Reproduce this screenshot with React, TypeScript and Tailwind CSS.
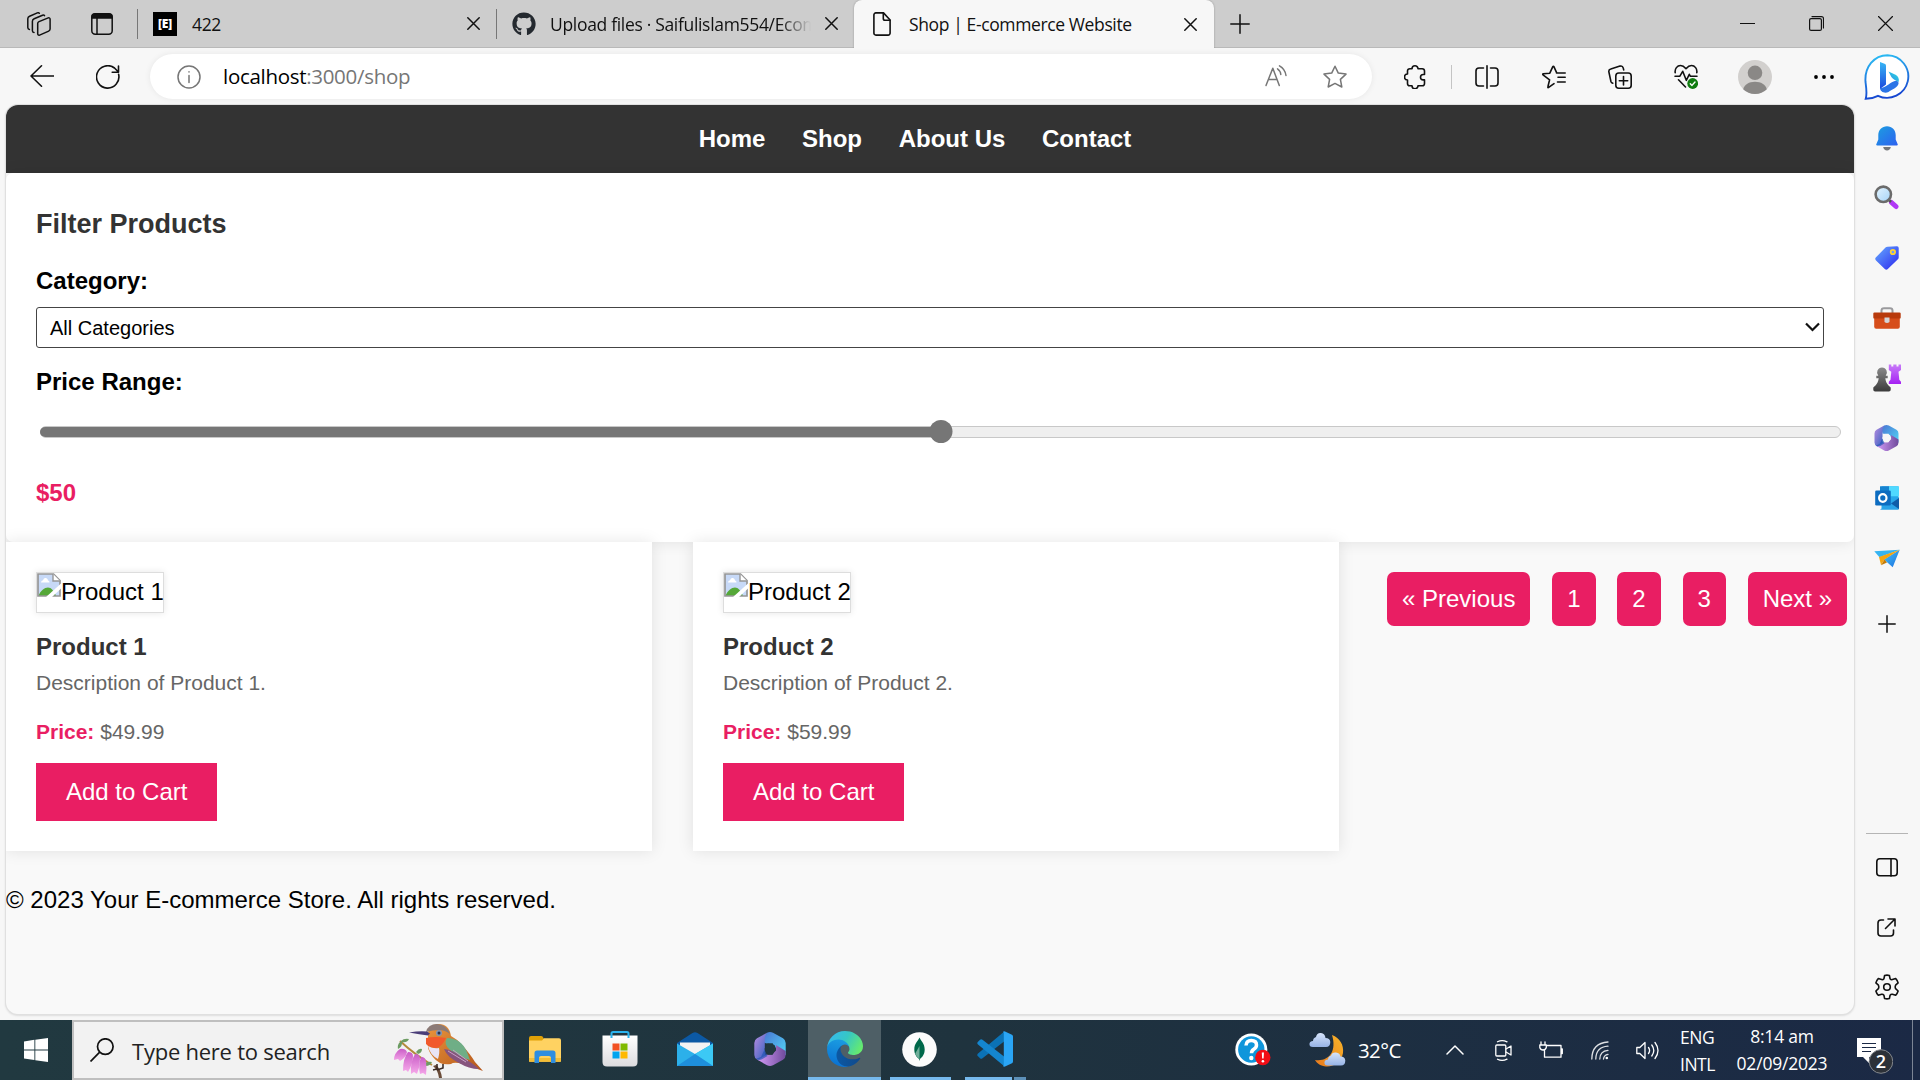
import React from "react";
import { FaGithub } from "react-icons/fa";

type P = { className?: string };
const line = { fill: "none", stroke: "currentColor", strokeLinecap: "round" as const, strokeLinejoin: "round" as const };

/* ---------- small glyphs ---------- */

const Close = ({ className = "" }: P) => (
  <svg viewBox="0 0 13 13" className={`h-[13px] w-[13px] shrink-0 ${className}`} {...line} strokeWidth="1.5">
    <path d="M.8.8l11.4 11.4M12.2.8L.8 12.2" />
  </svg>
);

const Workspaces = () => (
  <svg viewBox="0 0 24 24" className="ml-[27px] h-6 w-6 shrink-0" {...line} strokeWidth="1.5">
    <path d="M12 9.6c-.9.4-1.3 1-1.3 1.9v10.2c0 1.1.8 1.8 1.900 1.400l9.100-4c.9-.4 1.400-1.100 1.400-2V7.300c0-1.200-.9-1.800-1.900-1.400z" />
    <path d="M17.500 3.600c-.5-.6-1.200-.7-2-.4L7.200 6.800C6 7.300 5.400 8 5.400 9.200v9.600c0 1 .6 1.700 1.600 1.700" />
    <path d="M12.300 1.200c-.5-.5-1.200-.6-2-.3L2.600 4.300C1.400 4.800.8 5.500.8 6.700v8.800c0 1 .6 1.700 1.600 1.900" />
  </svg>
);

const TabPane = () => (
  <svg viewBox="0 0 22 22" className="ml-[40px] h-[22px] w-[22px] shrink-0" {...line} strokeWidth="1.5">
    <rect x=".8" y=".8" width="20.400" height="20.400" rx="3.500" />
    <path d="M1 5V3.500Q1 1 3.500 1h15Q21 1 21 3.500V5z" fill="currentColor" />
    <path d="M6 5.500V21" />
  </svg>
);

const PageIcon = () => (
  <svg viewBox="0 0 18 24" className="h-6 w-[18px] shrink-0" {...line} strokeWidth="1.6">
    <path d="M3 .9h7.500L17.100 8v13a2 2 0 0 1-2 2.100H3A2 2 0 0 1 .9 21V3A2 2 0 0 1 3 .9z" />
    <path d="M10.300 1v5.400c0 1 .7 1.800 1.700 1.800h5" />
  </svg>
);

const Puzzle = () => (
  <svg viewBox="0 0 22 24" className="ml-8 h-6 w-[22px] shrink-0" {...line} strokeWidth="1.6">
    <path d="M8 3.800a3 3 0 0 1 6 0h4.200c1.400 0 2.300.9 2.300 2.300v3.400h-1.300a2.700 2.700 0 0 0 0 5.400h1.300v3.600c0 1.400-.9 2.300-2.300 2.300H14a3 3 0 0 1-6 0H5.800c-1.400 0-2.300-.9-2.300-2.300V15a3 3 0 0 1 0-6V6.100c0-1.400.9-2.300 2.300-2.300z" />
  </svg>
);

const Split = () => (
  <svg viewBox="0 0 24 24" className="ml-[23px] h-6 w-6 shrink-0" {...line} strokeWidth="1.600">
    <path d="M12 .8v22.400M8.500 3H4Q1 3 1 6v12q0 3 3 3h4.500M15.500 3H20q3 0 3 3v12q0 3-3 3h-4.500" />
  </svg>
);

const FavList = () => (
  <svg viewBox="0 0 24 24" className="ml-[43px] h-6 w-6 shrink-0" {...line} strokeWidth="1.600">
    <path d="M12 18.600l-5.300 3.800c-.6.400-1 .1-.8-.6l1.700-7L1 9.800c-.5-.4-.3-.9.300-1l6.500-.6 3-6.500c.3-.6.800-.6 1.100 0l2.700 6M16 12.300h7.200M14.500 8h8.700M15.500 17h7.700" />
  </svg>
);

const Collections = () => (
  <svg viewBox="0 0 24 24" className="ml-[42px] h-6 w-6 shrink-0" {...line} strokeWidth="1.600">
    <rect x="7.800" y="8" width="15.400" height="15.200" rx="3" />
    <path d="M15.500 11.500v8.400M11.300 15.700h8.400M4.800 18.200c-1-.2-1.600-.8-1.900-1.800L.9 7C.6 5.500 1.300 4.300 2.800 3.900L12 1.100c1.600-.4 2.800.3 3.200 1.800l.5 2" />
  </svg>
);

const Health = () => (
  <svg viewBox="0 0 24 25" className="ml-[42px] h-[25px] w-6 shrink-0" {...line} strokeWidth="1.600">
    <path d="M1.200 8.600C.6 4.800 3.200 1.500 6.500 1.500c2.200 0 3.800 1.200 5.500 3.200 1.700-2 3.300-3.200 5.500-3.200 3.300 0 5.900 3.300 5.300 7.100M1 12.300h4.700l3-5 3.600 9 3-6 1.200 2H23M4.500 15.800l7 7.200" />
    <circle cx="18.700" cy="19.500" r="5.400" fill="#107c10" stroke="none" />
    <path d="M16.300 19.700l1.700 1.700 3-3.400" stroke="#fff" strokeWidth="1.400" />
  </svg>
);

const Bing = () => (
  <svg viewBox="0 0 46 46" className="ml-[30px] h-[46px] w-[46px] shrink-0">
    <defs>
      <linearGradient id="bo" x1="0" y1="0" x2=".2" y2="1"><stop stopColor="#2cc3f5" /><stop offset="1" stopColor="#1747d1" /></linearGradient>
      <linearGradient id="bb" x1="0" y1="0" x2="0" y2="1"><stop stopColor="#37b6f5" /><stop offset="1" stopColor="#1b48dd" /></linearGradient>
      <linearGradient id="bc" x1="0" y1="1" x2="1" y2="0"><stop stopColor="#2a86e8" /><stop offset="1" stopColor="#2ee0e0" /></linearGradient>
    </defs>
    <path d="M23.500 1.200A21.300 21.300 0 1 1 14 41.800c-3.500 1.800-7.500 3-12.300 3C3.300 40 2.300 34 1.500 28 .4 13 10 1.200 23.500 1.200z" fill="#fff" stroke="url(#bo)" strokeWidth="1.900" />
    <path d="M16 8l4.500 1.800c1 .4 1.500 1 1.500 2.200v18.500L16 35z" fill="url(#bb)" />
    <path d="M24.500 17.500l7 3.200c2.800 1.400 3.800 4 3.200 7.200-4-2-6-3-7.300-5z" fill="url(#bc)" />
    <path d="M16 34c4 .5 9-4.500 13.500-6.500 4-1.500 6.200.5 4.500 3.500-2 3.500-7 5-9.500 7-4 2-8.500-.5-8.500-4z" fill="#2b74e6" />
  </svg>
);

const M365 = ({ className = "" }: P) => (
  <svg viewBox="0 0 32 34" className={className}>
    <defs>
      <linearGradient id="ma" x1="0" y1="0" x2="1" y2="1"><stop stopColor="#b98de0" /><stop offset="1" stopColor="#2f5fc0" /></linearGradient>
      <linearGradient id="mb" x1="0" y1="0" x2="1" y2="1"><stop stopColor="#4a78d4" /><stop offset="1" stopColor="#52d6f6" /></linearGradient>
      <linearGradient id="mc" x1="0" y1="0" x2="1" y2="0"><stop stopColor="#d19af5" /><stop offset="1" stopColor="#6f4a9c" /></linearGradient>
    </defs>
    <path d="M13 .7L3 6.300Q.3 8 .3 11v12q0 3 3 4.700l1.500.9 7-4.600-1-2.700V11z" fill="url(#ma)" />
    <path d="M13 .7q3-1.400 6 0l10 5.600Q31.700 8 31.700 11v12L22 16.500 20.500 13 10.800 11V5z" fill="url(#mb)" />
    <path d="M31.700 19v4q0 3-2.700 4.700l-10 5.600q-3 1.400-6 0L4 28.100l9-5.600h5l4-4V13z" fill="url(#mc)" />
    <path d="M2 26.800q3 2 6 .5L13.500 24l-3-6.500L7 25z" fill="#2756b5" opacity=".7" />
    <path d="M13.500 11.300h5.200l3 5.700-3 5.700h-5.200l-3-5.700z" className="fill-current" />
  </svg>
);

/* ---------- edge sidebar icons ---------- */

const Bell = () => (
  <svg viewBox="0 0 22 25" className="h-[25px] w-[22px]">
    <defs><linearGradient id="be" x1="0" y1="0" x2="1" y2="1"><stop stopColor="#1c9fe0" /><stop offset="1" stopColor="#2d60f0" /></linearGradient></defs>
    <path d="M11 .3c5 0 8.700 3.800 8.700 8.700v4.500l2 4.800q.4 1.300-1 1.300H1.300q-1.400 0-1-1.300l2-4.800V9C2.300 4.100 6 .3 11 .3z" fill="url(#be)" />
    <path d="M7.200 21h7.600c-.4 2.200-1.800 3.600-3.800 3.600S7.600 23.200 7.200 21z" fill="#74767a" />
  </svg>
);

const SideSearch = () => (
  <svg viewBox="0 0 25 25" className="mb-[2px] h-[25px] w-[25px]">
    <defs><linearGradient id="gl" x1="0" y1="0" x2="1" y2="1"><stop stopColor="#e5f5ff" /><stop offset="1" stopColor="#a5d3f7" /></linearGradient></defs>
    <path d="M17.500 17.500l4.500 4" stroke="#b038f5" strokeWidth="5" strokeLinecap="round" />
    <path d="M14 14l3 3" stroke="#555" strokeWidth="2.500" />
    <circle cx="9.300" cy="9.300" r="7.700" fill="url(#gl)" stroke="#6b6b6b" strokeWidth="2.600" />
  </svg>
);

const Tag = () => (
  <svg viewBox="0 0 24 24" className="h-6 w-6">
    <defs><linearGradient id="tg" x1="0" y1="0" x2="1" y2="1"><stop stopColor="#66adff" /><stop offset="1" stopColor="#2b25ee" /></linearGradient></defs>
    <path d="M12.500.8L22 .3q1.700 0 1.700 1.700v9.500q0 1-.8 1.800L12.800 23q-1.500 1.300-3 0L1 14.500q-1.600-1.700 0-3.200L10.500 1.600q.8-.8 2-.8z" fill="url(#tg)" />
    <circle cx="17.900" cy="6" r="2.200" fill="#6f9cf5" stroke="#ffd335" strokeWidth="1.800" />
  </svg>
);

const Toolbox = () => (
  <svg viewBox="0 0 28 22" className="h-[22px] w-7">
    <path d="M8.500 6V3.600Q8.500 1.200 11 1.200h6q2.500 0 2.500 2.400V6" fill="none" stroke="#9a9a9d" strokeWidth="2" />
    <rect x="1.200" y="9" width="25.600" height="12.700" rx="2" fill="#d64d1a" />
    <path d="M1.500 5.400h25q1.200 0 1.200 1.200v3.800q0 1.200-1.200 1.200h-25Q.3 11.600.3 10.400V6.600q0-1.200 1.200-1.200z" fill="#b83a0c" />
    <path d="M11.500 10.500h5v4.500q-2.500 2-5 0z" fill="#d4d4d7" />
  </svg>
);

const Chess = () => (
  <svg viewBox="0 0 28 28" className="h-7 w-7">
    <defs>
      <linearGradient id="rk" x1="0" y1="0" x2="0" y2="1"><stop stopColor="#c77bf8" /><stop offset="1" stopColor="#a521f3" /></linearGradient>
      <linearGradient id="pn" x1="0" y1="0" x2="0" y2="1"><stop stopColor="#8a8a8a" /><stop offset="1" stopColor="#3b3b3b" /></linearGradient>
    </defs>
    <path d="M15.800.5h2.500v2h2V.5h3.200v2h2V.5H28V6l-2.500 1.800.8 8 1.700 2V20H15.800v-2.200l1.700-2 .8-8L15.800 6z" fill="url(#rk)" />
    <path d="M9 3.500a5 5 0 0 1 3.700 8.300h2v2.400h-2.400c.3 3 1.400 5 3 7l2.400 2.200v2.300q0 1.800-1.800 1.800H2.100Q.3 27.500.3 25.700v-2.300l2.400-2.200c1.600-2 2.700-4 3-7H3.300v-2.400h2A5 5 0 0 1 9 3.500z" fill="url(#pn)" />
  </svg>
);

const Outlook = () => (
  <svg viewBox="0 0 24 24" className="h-6 w-6">
    <path d="M6.500.3h17v22.200h-17z" fill="#28a8ea" /><path d="M5 .3h9v8H5z" fill="#1683d0" /><path d="M14 .3h9q1 0 1 1v9H14z" fill="#50d9ff" />
    <path d="M5 23.500L24 11v11.500q0 1.200-1.200 1.200H6.500z" fill="#2aa3e8" /><path d="M16 17.500L24 12v11z" fill="#0f5ca8" />
    <rect x=".2" y="4.500" width="15.600" height="15" rx="1.300" fill="#0d6cc0" />
    <ellipse cx="7.800" cy="12" rx="3.700" ry="3.800" fill="none" stroke="#fff" strokeWidth="2.200" />
  </svg>
);

const Plane = () => (
  <svg viewBox="0 0 26 18" className="h-[19px] w-[26px]">
    <defs><linearGradient id="pl" x1="0" y1="0" x2="1" y2="1"><stop stopColor="#45c7f7" /><stop offset="1" stopColor="#1b6de0" /></linearGradient></defs>
    <path d="M.3 1.800L25.700.2 5.500 7.800z" fill="#35b4f2" /><path d="M10 10L25.700.2 18.700 17.800z" fill="url(#pl)" />
    <path d="M5 7.600L25.700.3 10.500 10 7 15.500z" fill="#f5a511" /><path d="M7 15.700l3.500-5.700 2.500 3z" fill="#c57c08" />
  </svg>
);

const Gear = () => (
  <svg viewBox="0 0 24 26" className="h-[26px] w-6" {...line} strokeWidth="1.600">
    <path d="M9.600 1.500q2.400-.8 4.800 0l.7 3.300q.9 1.200 2.300.8l3.300-1q1.800 1.900 2.400 4.300L20.600 11.200q-.8 1.800 0 3.500l2.500 2.300q-.7 2.400-2.400 4.300l-3.300-1q-1.400-.3-2.300.9l-.7 3.300q-2.400.8-4.800 0l-.7-3.300q-.9-1.200-2.300-.9l-3.300 1Q1.500 19.400.9 17l2.500-2.300q.8-1.700 0-3.500L.9 8.900Q1.500 6.500 3.300 4.600l3.300 1q1.400.4 2.300-.8z" />
    <circle cx="12" cy="13" r="3.300" />
  </svg>
);

const sideIcons: React.ReactNode[] = [
  <Bell />, <SideSearch />, <Tag />, <Toolbox />, <Chess />,
  <M365 className="h-[26px] w-[25px] text-[#f7f7f7]" />, <Outlook />, <Plane />,
  <svg viewBox="0 0 18 18" className="mt-3 h-[18px] w-[18px]" {...line} strokeWidth="1.500"><path d="M9 .8v16.400M.8 9h16.400" /></svg>,
];

const sideTools: React.ReactNode[] = [
  <svg viewBox="0 0 22 19" className="h-[19px] w-[22px]" {...line} strokeWidth="1.600"><rect x=".8" y=".8" width="20.400" height="17" rx="3" /><path d="M15 1v17" /></svg>,
  <svg viewBox="0 0 19 19" className="h-[19px] w-[19px]" {...line} strokeWidth="1.600"><path d="M6.500 2H4Q1 2 1 5v10q0 3 3 3h9.500q3 0 3-3v-3M11 1h7v7M17.700 1.300L8.500 10.500" /></svg>,
  <Gear />,
];

/* ---------- browser chrome ---------- */

const TabBar = () => (
  <div className="flex h-12 shrink-0 items-center border-b border-[#b9b9b9] bg-[#cdcdcd] text-[17.5px] tracking-[-0.35px] text-[#111]">
    <Workspaces />
    <TabPane />
    <div className="ml-6 h-[30px] w-px shrink-0 bg-[#777]" />
    <div className="ml-[15px] flex h-6 w-6 shrink-0 items-center justify-center bg-black text-[12px] font-extrabold leading-none tracking-[-0.2px] text-white">[E]</div>
    <div className="ml-[15px] w-[275px] shrink-0 pt-px">422</div>
    <Close />
    <div className="ml-4 h-[30px] w-px shrink-0 bg-[#777]" />
    <FaGithub className="ml-[15px] h-6 w-6 shrink-0 text-[#24292f]" />
    <div className="ml-[14px] w-[261px] shrink-0 overflow-hidden whitespace-nowrap pt-px tracking-[-0.32px] [mask-image:linear-gradient(to_right,black_88%,transparent)]">Upload files · Saifulislam554/Ecom</div>
    <Close className="ml-[14px]" />
    <div className="ml-4 flex h-12 w-[360px] shrink-0 items-center self-start rounded-t-lg bg-[#f7f7f7] pl-[19px] shadow-[0_0_2px_rgba(0,0,0,0.3)] [clip-path:inset(-2px_-2px_0_-2px)]">
      <PageIcon />
      <div className="ml-[18px] w-[275px] shrink-0 tracking-[-0.38px]">Shop | E-commerce Website</div>
      <Close />
    </div>
    <svg viewBox="0 0 20 20" className="ml-4 h-5 w-5 shrink-0" {...line} strokeWidth="1.500"><path d="M10 .8v18.400M.8 10h18.400" /></svg>
    <svg viewBox="0 0 15 15" className="ml-[490px] h-[15px] w-[15px] shrink-0" {...line} strokeWidth="1.200"><path d="M0 7.500h15" /></svg>
    <svg viewBox="0 0 15 15" className="ml-[54px] h-[15px] w-[15px] shrink-0" {...line} strokeWidth="1.200"><rect x=".6" y="2.600" width="11.800" height="11.800" rx="1.500" /><path d="M3 .6h9.500q2 0 2 2V12" /></svg>
    <svg viewBox="0 0 15 15" className="ml-[54px] h-[15px] w-[15px] shrink-0" {...line} strokeWidth="1.200"><path d="M.5.500l14 14M14.500.5l-14 14" /></svg>
  </div>
);

const Toolbar = () => (
  <div className="flex h-[57px] shrink-0 items-center text-[#111]">
    <svg viewBox="0 0 24 24" className="mb-[2px] ml-[30px] h-6 w-6 shrink-0" {...line} strokeWidth="1.600"><path d="M11.500 1.800L1 12l10.500 10.200M1 12h22.500" /></svg>
    <svg viewBox="0 0 24 24" className="ml-[42px] h-6 w-6 shrink-0" {...line} strokeWidth="1.600"><path d="M22.600 9.300A11.200 11.200 0 1 1 18.500 3l3.700 3.800M22.500 1v6.200h-6.300" /></svg>
    <div className="ml-[30px] flex h-[45px] w-[1222px] shrink-0 items-center rounded-full bg-white text-[#767676] shadow-[0_0_6px_rgba(0,0,0,0.07)]">
      <svg viewBox="0 0 24 24" className="ml-[27px] h-6 w-6 shrink-0" {...line} strokeWidth="1.500"><circle cx="12" cy="12" r="11" /><path d="M12 10.500v7M12 6.800v.2" /></svg>
      <div className="ml-[22px] w-[1042px] shrink-0 text-[20.5px] tracking-[-0.3px]"><span className="text-black">localhost</span>:3000/shop</div>
      <svg viewBox="0 0 22 22" className="mb-[2px] h-[22px] w-[22px] shrink-0" {...line} strokeWidth="1.500"><path d="M1 20.500L7.800 3.300l6.500 17.200M3.500 14.500h8.500M12.500 3.800q3 2 3.300 5.700M14.500.9q5.500 3 6.500 9.600" /></svg>
      <svg viewBox="0 0 24 24" className="ml-9 h-6 w-6 shrink-0" {...line} strokeWidth="1.500"><path d="M12 1.200l3.300 6.900 7.700 1-5.600 5.300 1.400 7.600L12 18.400l-6.800 3.600 1.400-7.600L1 9.100l7.700-1z" /></svg>
    </div>
    <Puzzle />
    <div className="ml-[25px] h-6 w-px shrink-0 bg-[#c4c4c4]" />
    <Split />
    <FavList />
    <Collections />
    <Health />
    <svg viewBox="0 0 34 34" className="ml-10 h-[34px] w-[34px] shrink-0">
      <circle cx="17" cy="17" r="17" fill="#d2d0ce" /><circle cx="17" cy="12.800" r="7.300" fill="#8a8886" />
      <path d="M5.200 29.200C6.500 24.500 11 21.800 17 21.800s10.500 2.700 11.800 7.400A17 17 0 0 1 5.200 29.200z" fill="#8a8886" />
    </svg>
    <svg viewBox="0 0 20 4" className="ml-[42px] h-1 w-5 shrink-0"><circle cx="2" cy="2" r="1.900" /><circle cx="10" cy="2" r="1.900" /><circle cx="18" cy="2" r="1.900" /></svg>
    <Bing />
  </div>
);

/* ---------- shop page ---------- */

const BrokenImage = () => (
  <svg viewBox="0 0 24 24" className="h-6 w-6 shrink-0">
    <path d="M1 1h15.500L23 7.500V23H1z" fill="#c7d9f7" />
    <path d="M4 9.500q0-2 2-2.200Q6.800 4.500 9 5q2 .5 2 2.500 1.500.2 1.500 2z" fill="#fff" />
    <path d="M1.500 23c2-5.500 6-8.500 9.500-8.500 3 0 6 3 8 8.500z" fill="#55a838" />
    <path d="M1 23V1h15.500L23 7.500V23z" fill="none" stroke="#969696" strokeWidth="1.700" />
    <path d="M16 1v7h7" fill="#fff" stroke="#969696" strokeWidth="1.400" />
    <path d="M8.500 24.500L24.500 10v5L14.500 24.500z" fill="#fff" />
  </svg>
);

const products = [
  { name: "Product 1", text: "Description of Product 1.", price: "$49.99" },
  { name: "Product 2", text: "Description of Product 2.", price: "$59.99" },
];

const Shop = () => (
  <main className="h-[909px] w-[1848px] overflow-hidden rounded-xl bg-[#f9f9f9] font-['Liberation_Sans',Arial,sans-serif] text-2xl leading-7 text-black shadow-[0_0_0_1px_#e0e0e0,0_1px_2px_1px_rgba(0,0,0,0.1)]">
    <nav className="flex h-[68px] justify-center gap-[36.67px] bg-[#333] pr-[30px] pt-5 font-bold text-white">
      {["Home", "Shop", "About Us", "Contact"].map((n) => <a key={n}>{n}</a>)}
    </nav>
    <section className="relative flex h-[369px] flex-col rounded-[7px] bg-white px-[30px] pt-[35px] shadow-[0_0_15px_rgba(0,0,0,0.1)]">
      <h2 className="text-[27px] font-bold leading-8 text-[#333]">Filter Products</h2>
      <label className="mt-[27px] font-bold">Category:</label>
      <div className="mt-3 flex h-[41px] shrink-0 items-center justify-between rounded-[3px] border border-[#444] pl-[13px] pr-[3px] text-[20px]">
        All Categories
        <svg viewBox="0 0 15 10" className="mb-px h-[10px] w-[15px]" fill="none" stroke="#111" strokeWidth="2.200"><path d="M1 1.500l6.500 6.500L14 1.500" /></svg>
      </div>
      <label className="mt-5 font-bold">Price Range:</label>
      <div className="relative -mr-[17px] ml-1 mt-[30px] h-3 shrink-0 rounded-full border border-[#c8c8c8] bg-[#efefef]">
        <div className="-ml-px h-[10px] w-1/2 rounded-l-full bg-[#767676]" />
        <div className="absolute left-1/2 top-[-7px] h-[23px] w-[23px] -translate-x-1/2 rounded-full bg-[#767676]" />
      </div>
      <p className="mt-[41px] font-bold text-[#e91e63]">$50</p>
    </section>
    <div className="flex items-start">
      {products.map((p) => (
        <article key={p.name} className="relative mr-[41px] flex h-[309px] w-[646px] shrink-0 flex-col items-start bg-white p-[30px] shadow-[0_0_15px_rgba(0,0,0,0.1)]">
          <div className="flex h-[41px] border border-[#ddd] shadow-[0_0_7px_rgba(0,0,0,0.1)]">
            <BrokenImage /><span className="-mr-px pt-[5px]">{p.name}</span>
          </div>
          <h3 className="mt-5 font-bold text-[#333]">{p.name}</h3>
          <p className="mt-[10px] text-[21px] leading-6 text-[#666]">{p.text}</p>
          <p className="mt-[25px] text-[21px] leading-6 text-[#666]"><b className="text-[#e91e63]">Price:</b> {p.price}</p>
          <button className="mt-[19px] h-[58px] bg-[#e91e63] px-[30px] text-white">Add to Cart</button>
        </article>
      ))}
      <div className="ml-[7px] mt-[30px] flex gap-[21.8px] text-white">
        {["« Previous", "1", "2", "3", "Next »"].map((t) => (
          <a key={t} className="h-[54px] whitespace-nowrap rounded-[7px] bg-[#e91e63] px-[15px] pt-[13px]">{t}</a>
        ))}
      </div>
    </div>
    <footer className="mt-[35px]">© 2023 Your E-commerce Store. All rights reserved.</footer>
  </main>
);

/* ---------- taskbar ---------- */

const Bird = () => (
  <svg viewBox="0 0 92 56" className="h-[56px] w-[92px] shrink-0">
    <defs>
      <linearGradient id="bd" x1="0" y1="0" x2="1" y2="1"><stop stopColor="#e9963c" /><stop offset="1" stopColor="#b5561b" /></linearGradient>
      <linearGradient id="fl" x1="0" y1="0" x2="0" y2="1"><stop stopColor="#c95cc6" /><stop offset="1" stopColor="#f6a9ea" /></linearGradient>
    </defs>
    <path d="M8 19q14 13 32 24" fill="none" stroke="#b48a3c" strokeWidth="2" />
    <path d="M8 20q-3 3-2 7 5-3 4-8zM10 20q5 1 7-3-5-1-8 2zM24 30q3-4 6-3 0 4-4 5zM33 41q4-2 7-1-2 4-6 4z" fill="#6d9c63" />
    <path d="M8 27q5-1 7 3-1 6-7 9l-2-2-4 1Q2 31 8 27z" fill="url(#fl)" />
    <path d="M16 30q5 0 5 4 0 8-5 16l-2-2-3 1q0-13 5-19z" fill="url(#fl)" />
    <path d="M23 32q5 0 5 5 0 8-3 15l-3-2-3 2q-1-12 4-20z" fill="url(#fl)" />
    <path d="M29 35q5 0 5 5 1 6 0 13l-3-2-3 1q-2-9 1-17z" fill="url(#fl)" />
    <path d="M41 44q5 4 6 12h3q-1-9-6-13z" fill="#6a4c39" />
    <path d="M36 12q0-9 9-10 12-1 14 12 6 3 11 9 9 10 13 17l8 9-11-4q-8-3-13-4-6-1-8 1-11 2-18-7-7-8-5-17z" fill="url(#bd)" />
    <path d="M34 10Q36 2 45 2q9 0 13 10-5-4-11-4-6 0-13 2z" fill="#8b7a76" />
    <path d="M35 9.500q-7-1-18 1 11 2 19 3l2-2z" fill="#4a3d78" />
    <path d="M34 16q9-2 20 0-4 9-10 10-6 0-10-4z" fill="#f1592b" />
    <path d="M36 24q5 3 11 2 1 4-1 11-8-4-10-13z" fill="#e9e5f5" />
    <path d="M55 16q14 0 20 14l3 8q-12-3-20-10-7-6-3-12z" fill="#6fae86" />
    <path d="M52 27q9 1 16 7 13 7 19 13-10 0-20-6-12-6-15-14z" fill="#86547d" />
    <path d="M56 29l18 11M61 28l15 11" stroke="#c7a0c5" strokeWidth="1" />
    <circle cx="47" cy="11" r="3" fill="#8094b5" /><circle cx="47" cy="11" r="1.500" fill="#26334f" />
    <path d="M45 42v5l-4 1M51 42v4l-6 2" fill="none" stroke="#3b2b25" strokeWidth="1.600" />
  </svg>
);

const Explorer = () => (
  <svg viewBox="0 0 32 27" className="h-[27px] w-8">
    <path d="M0 2q0-2 2-2h10q1.500 0 2 1.200L15 3v4H0z" fill="#e0a106" /><path d="M0 4.500h13l2-2.300h15q2 0 2 2V25q0 .8-.8.800H.8Q0 25.800 0 25z" fill="#ffd261" />
    <path d="M0 22h32v3q0 .8-.8.8H.8Q0 25.800 0 25z" fill="#f3bd35" />
    <path d="M5.500 27V17q0-2.500 2.500-2.500h16q2.500 0 2.500 2.500v10H22v-5q0-2-2-2h-8q-2 0-2 2v5z" fill="#2f8ee0" />
  </svg>
);

const Store = () => (
  <svg viewBox="0 0 36 36" className="h-9 w-9">
    <defs><linearGradient id="st" x1="0" y1="0" x2="0" y2="1"><stop stopColor="#fff" /><stop offset="1" stopColor="#dcdcdf" /></linearGradient></defs>
    <path d="M.5 4.500h35V31q0 4.500-4.500 4.500H5Q.5 35.500.5 31z" fill="url(#st)" />
    <path d="M9.500 7V2.500q0-1.500 1.500-1.500h14q1.500 0 1.500 1.500V7" fill="none" stroke="#29b3ee" strokeWidth="2" />
    <path d="M10.500 12.500h7v7h-7z" fill="#f25022" /><path d="M18.500 12.500h7v7h-7z" fill="#7fba00" /><path d="M10.500 20.500h7v7h-7z" fill="#00a4ef" /><path d="M18.500 20.500h7v7h-7z" fill="#ffb900" />
  </svg>
);

const Mail = () => (
  <svg viewBox="0 0 36 34" className="h-[34px] w-9">
    <path d="M0 11L15.500 1q2.500-1.400 5 0L36 11v4H0z" fill="#0c59a4" /><path d="M3 10.500h30v10L18 24 3 20z" fill="#f3f3f3" />
    <path d="M0 11.500L18 22l18-10.500V34H0z" fill="#2cb0ea" /><path d="M18 22l18-10.500V34z" fill="#3cc9f5" /><path d="M0 34h36L18 22z" fill="#1e8fdc" />
  </svg>
);

const Edge = () => (
  <svg viewBox="0 0 256 256" className="h-9 w-9">
    <defs>
      <linearGradient id="e1" x1="0" y1="0" x2="1" y2="0"><stop stopColor="#0c59a4" /><stop offset="1" stopColor="#114a8b" /></linearGradient>
      <linearGradient id="e2" x1=".5" y1="0" x2=".3" y2="1"><stop stopColor="#1b9de2" /><stop offset="1" stopColor="#0a6fd0" /></linearGradient>
      <linearGradient id="e3" x1="0" y1=".2" x2="1" y2=".6"><stop stopColor="#35b8f1" /><stop offset=".5" stopColor="#36c7c4" /><stop offset="1" stopColor="#66eb6e" /></linearGradient>
    </defs>
    <path fill="url(#e1)" d="M231 190.500c-3.400 1.800-6.900 3.400-10.500 4.700a101.500 101.500 0 0 1-35.900 6.400c-47.300 0-88.500-32.500-88.500-74.300 0-11.400 6.400-21.900 16.400-27.300-42.800 1.800-53.800 46.400-53.800 72.500 0 74 68.100 81.400 82.800 81.400 7.900 0 19.800-2.300 27-4.600l1.300-.4a128.300 128.300 0 0 0 66.600-52.800 4 4 0 0 0-5.400-5.600z" />
    <path fill="url(#e2)" d="M105.700 241.400a79.200 79.200 0 0 1-22.700-21.300 80.700 80.700 0 0 1 29.500-120c3.200-1.500 8.500-4.100 15.600-4a32.400 32.400 0 0 1 25.700 13 31.900 31.900 0 0 1 6.300 18.700c0-.2 24.500-79.600-80-79.600-43.900 0-80 41.600-80 78.200a130.200 130.200 0 0 0 12.100 56 128 128 0 0 0 156.400 67 75.500 75.500 0 0 1-62.800-8z" />
    <path fill="url(#e3)" d="M152.300 148.900c-.8 1-3.300 2.500-3.300 5.700 0 2.600 1.700 5.100 4.700 7.200 14.400 10 41.500 8.700 41.600 8.700 10.700 0 21.100-2.900 30.300-8.300a61.400 61.400 0 0 0 30.400-52.900c.3-22.400-8-37.300-11.300-43.900C223.500 23.900 177.700 0 128 0A128 128 0 0 0 0 126.200c.5-36.500 36.800-66 80-66 3.500 0 23.500.3 42 10.100 16.300 8.600 24.900 18.900 30.800 29.200 6.200 10.700 7.300 24.100 7.300 29.500s-2.700 13.300-7.800 19.900z" />
  </svg>
);

const Mongo = () => (
  <svg viewBox="0 0 35 35" className="h-[35px] w-[35px]">
    <circle cx="17.500" cy="17.500" r="17.300" fill="#fbfbfb" />
    <path d="M17.500 5.500c1 3 5.200 5.500 5.200 12 0 5-2.800 8-4.700 9.500l-.5 2-.5-2c-1.900-1.500-4.700-4.500-4.700-9.500 0-6.500 4.200-9 5.200-12z" fill="#00684a" />
    <path d="M17.500 14v14l-.5-1.500c-1.500-1.300-3-2.600-3.800-5z" fill="#6fae9a" />
  </svg>
);

const VSCode = () => (
  <svg viewBox="0 0 36 36" className="h-9 w-9">
    <path d="M1 22.500Q-.5 24 1 25.300l2 1.900q1.200 1 2.500 0L27 10.500V.8z" fill="#0b72b5" />
    <path d="M1 13.500Q-.5 12 1 10.700l2-1.900q1.200-1 2.500 0L27 25.500V35z" fill="#1486cf" />
    <path d="M26.500.5q.7-.4 1.500 0l7 3.300q1 .5 1 1.700v25q0 1.200-1 1.700l-7 3.300q-1.200.5-2-.5l.8-.7V1.700l-.8-.7z" fill="#2aa5f5" />
  </svg>
);

const tasks = [
  { icon: <Explorer /> }, { icon: <Store /> }, { icon: <Mail /> },
  { icon: <M365 className="h-[34px] w-8 text-[#213840]" /> },
  { icon: <Edge />, active: true }, { icon: <Mongo />, open: true }, { icon: <VSCode />, multi: true },
] as { icon: React.ReactNode; active?: boolean; open?: boolean; multi?: boolean }[];

const Taskbar = () => (
  <div className="flex h-[60px] shrink-0 items-center overflow-hidden bg-linear-to-r from-[#213940] via-[#1f333e] to-[#1b2945] text-white">
    <div className="flex w-[72px] shrink-0 justify-center">
      <svg viewBox="0 0 24 24" className="h-6 w-6" fill="#fff"><path d="M0 3.400l10.400-1.600v9.700H0zM11.300 1.700L24 0v11.500H11.300zM0 12.400h10.400v9.700L0 20.600zM11.300 12.400H24V24l-12.700-1.800z" /></svg>
    </div>
    <div className="flex h-[60px] w-[432px] shrink-0 items-center border-2 border-[#bfbfbf] bg-[#f2f2f2] text-[#222]">
      <svg viewBox="0 0 24 24" className="ml-4 h-6 w-6 shrink-0" fill="none" stroke="#111" strokeWidth="1.700"><circle cx="15.300" cy="8.600" r="7.800" /><path d="M9.700 14.200L.5 23.500" /></svg>
      <div className="ml-[18px] w-[260px] shrink-0 pt-[2px] text-[22px] tracking-[-0.24px]">Type here to search</div>
      <Bird />
    </div>
    <div className="ml-[3px] mr-px flex shrink-0">
      {tasks.map((t, i) => (
        <div key={i} className={`relative mx-px flex h-[60px] w-[73px] items-center justify-center pb-[2px] ${t.active ? "bg-[#4e5f66]" : ""}`}>
          {t.icon}
          {t.active && <div className="absolute inset-x-0 bottom-0 h-[3px] bg-[#76b9ed]" />}
          {t.open && <div className="absolute bottom-0 left-[7px] h-[3px] w-[61px] bg-[#76b9ed]" />}
          {t.multi && <div className="absolute bottom-0 left-[7px] flex h-[3px] gap-[2px]"><div className="w-[47px] bg-[#76b9ed]" /><div className="w-3 bg-[#5d91b9]" /></div>}
        </div>
      ))}
    </div>
    <svg viewBox="0 0 36 34" className="ml-[202px] h-[34px] w-9 shrink-0">
      <circle cx="16.300" cy="16.500" r="16" fill="#fff" /><circle cx="16.300" cy="16.500" r="13.200" fill="#0f96db" />
      <path d="M11 12.500q.3-5 5.300-5 5.200 0 5.200 4.500 0 2.500-2.700 4.300-2.300 1.500-2.300 4" fill="none" stroke="#fff" strokeWidth="3.500" /><circle cx="16.300" cy="25" r="2.200" fill="#fff" />
      <circle cx="27.800" cy="24.500" r="7.700" fill="#f20d15" /><path d="M26.800 19.500h2.200l-.4 6h-1.400z" fill="#fff" /><circle cx="27.900" cy="28.300" r="1.300" fill="#fff" />
    </svg>
    <svg viewBox="0 0 37 35" className="mb-[2px] ml-[38px] h-[35px] w-[37px] shrink-0">
      <defs>
        <linearGradient id="mo" x1="1" y1="0" x2="0" y2="1"><stop stopColor="#f9b52a" /><stop offset="1" stopColor="#e8791d" /></linearGradient>
        <linearGradient id="cl" x1="0" y1="0" x2="0" y2="1"><stop stopColor="#d6e4fb" /><stop offset="1" stopColor="#96b3e6" /></linearGradient>
      </defs>
      <path d="M23 3c8 3 12 10 11 18-1.500 9-9 14-17 13.500-5-.5-9-3-11-6.500 14 2 22-9 17-25z" fill="url(#mo)" />
      <path d="M4 15q-4 0-3.500-3.500Q1 9 4 9q0-3 3-4 1-4.500 5-4 4 .5 4.500 5 4.500 0 4.800 4 0 5-4.300 5z" fill="url(#cl)" />
      <path d="M19 33.500q-4 0-3.500-3.500.5-2.500 3.500-2.500 0-3 3-4 1-3.500 5-3 4 .5 4.500 4 4.500 0 4.800 4 0 5-4.300 5z" fill="url(#cl)" />
    </svg>
    <div className="ml-3 w-[45px] shrink-0 whitespace-nowrap text-[20.500px] tracking-[-0.6px]">32°C</div>
    <svg viewBox="0 0 18 10" className="ml-[43px] h-[10px] w-[18px] shrink-0" {...line} strokeWidth="1.500"><path d="M1 9l8-8 8 8" /></svg>
    <svg viewBox="0 0 17 23" className="ml-[31px] h-[23px] w-[17px] shrink-0" {...line} strokeWidth="1.300"><rect x=".8" y="6" width="10" height="11" rx="1" /><path d="M11 10l5-3v9l-5-3M2.500 2.800Q7 .3 12 2.800M2.500 20.200q4.500 2.500 9.500 0" /></svg>
    <svg viewBox="0 0 24 18" className="ml-[27px] h-[18px] w-6 shrink-0" {...line} strokeWidth="1.300"><path d="M8 4.500h14v11.700H5.500V9M22 8h1.300v4.500H22M2 .8V4M6 .8V4M.8 4h6.500v2.500Q6.500 9 4 9 1.500 9 .8 6.500z" /></svg>
    <svg viewBox="0 0 18 19" className="ml-7 h-[19px] w-[18px] shrink-0" {...line} strokeWidth="1.300"><path d="M.8 18Q1 2 17 1M4.800 18Q5 6 17 5.200M8.800 18Q9 10 17 9.400M12.500 18q.5-4 4.500-4.600" opacity=".85" /><circle cx="15.800" cy="17" r="1.300" fill="#fff" stroke="none" /></svg>
    <svg viewBox="0 0 23 19" className="ml-[27px] h-[19px] w-[23px] shrink-0" {...line} strokeWidth="1.300"><path d="M.8 6.500h3L9 1.500v16l-5.200-5h-3zM12.500 6.500q2.200 3 0 6M15.800 4q4 5.500 0 11M19 1.500q6 8 0 16" /></svg>
    <div className="ml-[21px] w-[36px] shrink-0 pt-px text-[17.500px] leading-[27px] tracking-[-0.5px]">ENG<br />INTL</div>
    <div className="ml-[17px] w-[98px] shrink-0 whitespace-nowrap pb-px text-center text-[17.500px] leading-[27px] tracking-[-0.2px]">8:14 am<br />02/09/2023</div>
    <svg viewBox="0 0 36 36" className="ml-[26px] mt-[11px] h-9 w-9 shrink-0">
      <path d="M0 0h24v19H12l0 6-6-6H0z" fill="#fff" /><path d="M5 5.500h14M5 9.500h14M5 13.500h9" stroke="#1b2945" strokeWidth="1.200" />
      <circle cx="24" cy="23.500" r="11.800" fill="#2c3138" stroke="#84888e" strokeWidth="1" />
      <text x="24" y="29.500" textAnchor="middle" fontSize="18" fontWeight="600" fill="#fff">2</text>
    </svg>
    <div className="ml-[19px] h-[60px] w-px shrink-0 bg-[#7c8595]" />
  </div>
);

export default function App() {
  return (
    <div className="flex h-[1080px] w-[1920px] flex-col overflow-hidden bg-[#f7f7f7] font-['Open_Sans','Noto_Sans',sans-serif]">
      <TabBar />
      <Toolbar />
      <div className="flex h-[915px] shrink-0">
        <div className="w-[1855px] shrink-0 pl-[6px]"><Shop /></div>
        <aside className="flex flex-1 flex-col items-center pb-[3px] pr-[2px] pt-[3px] text-[#111]">
          {sideIcons.map((ic, i) => <div key={i} className="flex h-[60px] shrink-0 items-center">{ic}</div>)}
          <div className="mb-[3px] mt-auto h-px w-[42px] bg-[#b5b5b5]" />
          {sideTools.map((ic, i) => <div key={i} className="flex h-[60px] shrink-0 items-center">{ic}</div>)}
        </aside>
      </div>
      <Taskbar />
    </div>
  );
}
